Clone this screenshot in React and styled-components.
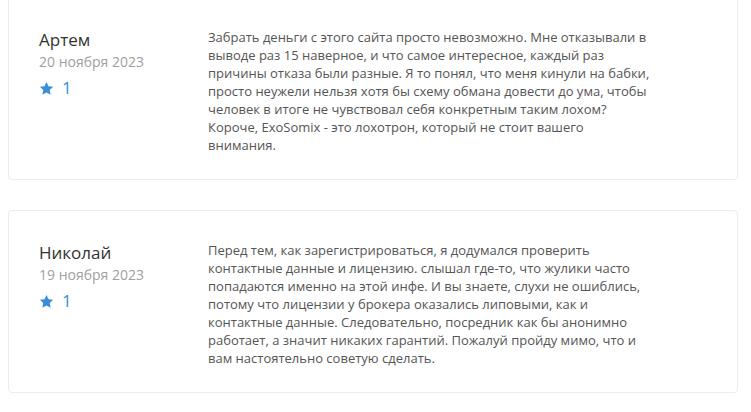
import React from "react";
import styled, { createGlobalStyle } from "styled-components";

const GlobalStyle = createGlobalStyle`
  html, body {
    margin: 0;
    padding: 0;
    background: #ffffff;
  }
  body {
    font-family: "Open Sans", "Liberation Sans", sans-serif;
  }
`;

const List = styled.div`
  display: flex;
  flex-direction: column;
  gap: 30px;
  margin-top: -3px;
  padding: 0 13px 0 8px;
`;

const Card = styled.div`
  display: grid;
  grid-template-columns: 169px 1fr;
  padding: 30px 30px 25px 30px;
  border: 1px solid #ececec;
  border-radius: 4px;
  background: #fff;
`;

const Author = styled.div`
  display: flex;
  flex-direction: column;
  padding-top: 1px;
`;

const Name = styled.div`
  font-size: 17px;
  line-height: 22px;
  color: #333;
`;

const Date = styled.div`
  font-size: 14px;
  line-height: 22px;
  color: #a0a0a0;
`;

const Rating = styled.div`
  display: flex;
  align-items: center;
  gap: 8px;
  margin-top: 4px;
  font-size: 17px;
  line-height: 22px;
  color: #3a8fd9;
`;

const Text = styled.p`
  margin: 0;
  max-width: 446px;
  font-size: 13px;
  line-height: 18px;
  color: #555;
`;

const Star = () => (
  <svg width="15" height="15" viewBox="0 0 24 24" fill="#3a8fd9">
    <path d="M12 1.5l3.2 6.9 7.5.9-5.5 5.2 1.4 7.5L12 18.3l-6.6 3.7 1.4-7.5L1.3 9.3l7.5-.9z" />
  </svg>
);

const reviews = [
  {
    name: "Артем",
    date: "20 ноября 2023",
    rating: 1,
    text: "Забрать деньги с этого сайта просто невозможно. Мне отказывали в выводе раз 15 наверное, и что самое интересное, каждый раз причины отказа были разные. Я то понял, что меня кинули на бабки, просто неужели нельзя хотя бы схему обмана довести до ума, чтобы человек в итоге не чувствовал себя конкретным таким лохом? Короче, ExoSomix - это лохотрон, который не стоит вашего внимания.",
  },
  {
    name: "Николай",
    date: "19 ноября 2023",
    rating: 1,
    text: "Перед тем, как зарегистрироваться, я додумался проверить контактные данные и лицензию. слышал где-то, что жулики часто попадаются именно на этой инфе. И вы знаете, слухи не ошиблись, потому что лицензии у брокера оказались липовыми, как и контактные данные. Следовательно, посредник как бы анонимно работает, а значит никаких гарантий. Пожалуй пройду мимо, что и вам настоятельно советую сделать.",
  },
];

export default function App() {
  return (
    <>
      <GlobalStyle />
      <List>
        {reviews.map((r) => (
          <Card key={r.name}>
            <Author>
              <Name>{r.name}</Name>
              <Date>{r.date}</Date>
              <Rating>
                <Star />
                {r.rating}
              </Rating>
            </Author>
            <Text>{r.text}</Text>
          </Card>
        ))}
      </List>
    </>
  );
}
